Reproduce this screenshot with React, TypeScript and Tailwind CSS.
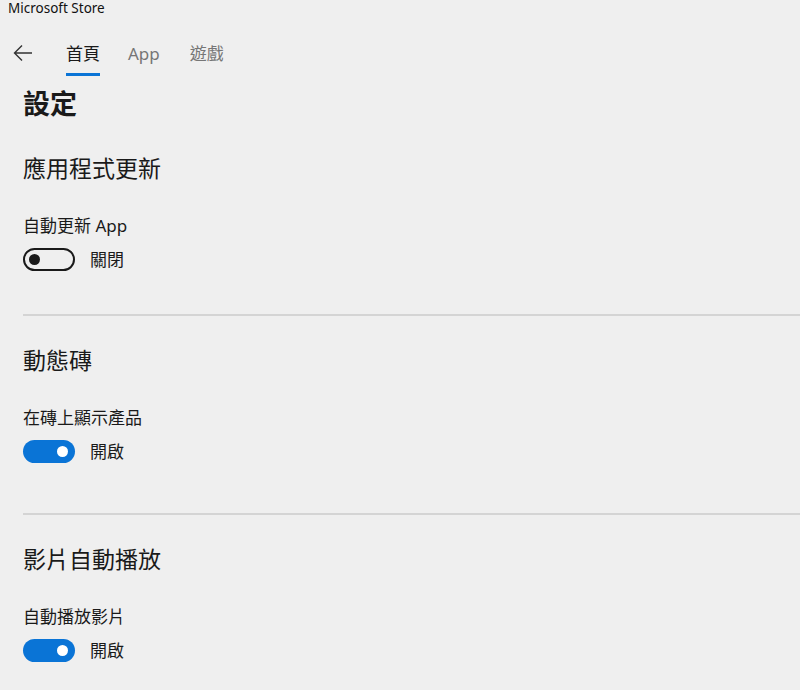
import React from 'react';

const font = { fontFamily: '"Noto Sans", "Noto Sans CJK TC", sans-serif' };

interface ToggleRowProps {
  label: string;
  on: boolean;
}

const ToggleRow: React.FC<ToggleRowProps> = ({ label, on }) => (
  <>
    <div className="mt-[32px] text-[17px] leading-[20px] text-[#1a1a1a]">{label}</div>
    <div className="mt-[12px] flex items-center h-[23px]">
      {on ? (
        <div className="w-[52px] h-[23px] rounded-full bg-[#0a74d6] flex items-center justify-end pr-[7px]">
          <div className="w-[11px] h-[11px] rounded-full bg-white" />
        </div>
      ) : (
        <div className="w-[52px] h-[23px] rounded-full border-2 border-[#1a1a1a] flex items-center pl-[4px]">
          <div className="w-[11px] h-[11px] rounded-full bg-[#1a1a1a]" />
        </div>
      )}
      <span className="ml-[15px] text-[17px] leading-[20px] text-[#1a1a1a]">{on ? '開啟' : '關閉'}</span>
    </div>
  </>
);

const SectionHeading: React.FC<{ children: React.ReactNode; first?: boolean }> = ({ children, first }) => (
  <div className={`${first ? 'mt-[22px]' : 'mt-[28px]'} text-[23px] leading-[32px] text-[#1a1a1a]`}>{children}</div>
);

export default function App() {
  return (
    <div className="w-[800px] h-[690px] overflow-hidden bg-[#efefef]" style={font}>
      {/* Title bar */}
      <div className="h-[16px] pl-[8px] text-[13.5px] leading-[16px] text-[#111]">Microsoft Store</div>

      {/* Nav */}
      <div className="h-[62px] flex items-start pl-[13px]">
        <div className="mt-[27px] w-[20px] h-[20px] text-[#333]">
          <svg viewBox="0 0 20 20" width="20" height="20" fill="none" stroke="currentColor" strokeWidth="1.4">
            <path d="M19 10H1.5M9 2.5L1.5 10L9 17.5" />
          </svg>
        </div>
        <div className="ml-[33px] flex flex-col items-stretch">
          <span className="mt-[26px] text-[17px] leading-[24px] text-[#1a1a1a]">首頁</span>
          <div className="mt-[7px] h-[3px] bg-[#0a74d6]" />
        </div>
        <span className="ml-[28px] mt-[26px] text-[17px] leading-[24px] text-[#767676]">App</span>
        <span className="ml-[30px] mt-[26px] text-[17px] leading-[24px] text-[#767676]">遊戲</span>
      </div>

      <div className="pl-[23px]">
        <div className="h-[52px] text-[27px] leading-[52px] font-semibold text-[#1a1a1a]">設定</div>

        <SectionHeading first>應用程式更新</SectionHeading>
        <ToggleRow label="自動更新 App" on={false} />
        <div className="mt-[43px] h-[2px] bg-[#d4d4d4]" />

        <SectionHeading>動態磚</SectionHeading>
        <ToggleRow label="在磚上顯示產品" on />
        <div className="mt-[50px] h-[2px] bg-[#d4d4d4]" />

        <SectionHeading>影片自動播放</SectionHeading>
        <ToggleRow label="自動播放影片" on />
      </div>
    </div>
  );
}
